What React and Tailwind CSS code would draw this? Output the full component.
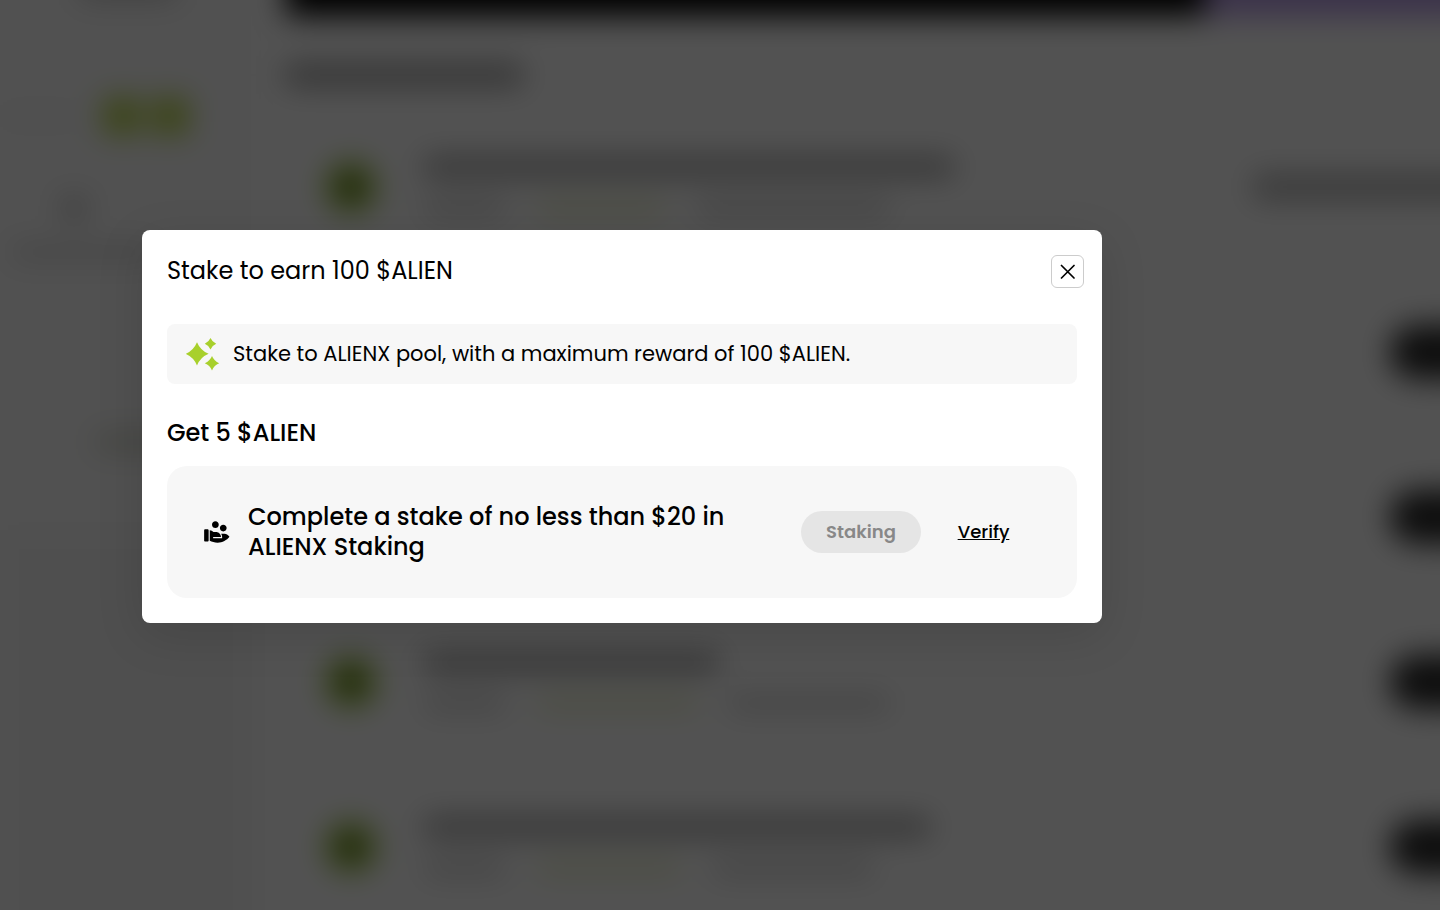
import { useState } from 'react';
import { RiHandCoinFill } from 'react-icons/ri';
import clsx from 'clsx';

const rows = [
  { id: 1, title: 'w-[528px]', reward: 'w-32', note: 'w-48', done: true },
  { id: 2, title: 'w-[420px]', reward: 'w-32', note: 'w-40' },
  { id: 3, title: 'w-[460px]', reward: 'w-32', note: 'w-40' },
  { id: 4, title: 'w-[292px]', reward: 'w-40', note: 'w-40' },
  { id: 5, title: 'w-[504px]', reward: 'w-36', note: 'w-40' },
];

const Sparkles = () => (
  <svg width="34" height="34" viewBox="0 0 34 34" fill="#a8d02c" aria-hidden="true" className="shrink-0">
    <path d="M11 5.2Q14.4 13.4 22.6 16.8Q14.4 20.2 11 28.4Q7.6 20.2 -0.4 16.8Q7.6 13.4 11 5.2Z" />
    <path d="M24.5 1Q26.2 5 30.2 6.7Q26.2 8.4 24.5 12.4Q22.8 8.4 18.8 6.7Q22.8 5 24.5 1Z" />
    <path d="M26 19Q28.1 24.1 33.2 26.2Q28.1 28.3 26 33.4Q23.9 28.3 18.8 26.2Q23.9 24.1 26 19Z" />
  </svg>
);

const CloseIcon = () => (
  <svg width="15" height="15" viewBox="0 0 15 15" fill="none" stroke="#000" strokeWidth="1.7" strokeLinecap="round" aria-hidden="true">
    <path d="M1.5 1.5L14 14M14 1.5L1.5 14" />
  </svg>
);

const TaskRow = ({ row }) => (
  <div className="flex h-[165px] shrink-0 items-center">
    <div className="flex size-[52px] shrink-0 items-center justify-center rounded-full bg-[#a3cc44]">
      <div className="size-5 rounded-full bg-[#1c2400]" />
    </div>
    <div className="ml-12 flex flex-col gap-6">
      <div className={clsx('h-[18px] bg-[#9c9c9c]', row.title)} />
      <div className="flex h-4 gap-8">
        <div className="w-20 bg-[#d0d0d0]" />
        <div className={clsx('bg-[#e8edc8]', row.reward)} />
        <div className={clsx('bg-[#d0d0d0]', row.note)} />
      </div>
    </div>
    <div className={clsx('ml-auto shrink-0', row.done ? 'h-6 w-[226px] bg-[#b0b0b0]' : 'h-[54px] w-[90px] rounded-l-full bg-[#2c2c2c]')} />
  </div>
);

// Runs 40px past every edge so the blur has no pale rim inside the window
const Backdrop = () => (
  <div className="absolute -inset-10 flex overflow-hidden bg-white blur-[15px]" aria-hidden="true">
    <aside className="flex w-[296px] shrink-0 flex-col bg-[#fbfbfb] pl-10">
      <div className="mx-auto h-10 w-24 bg-[#cccccc]" />
      <div className="mt-[98px] flex items-center justify-between pr-[68px]">
        <div className="h-3 w-20 bg-[#f0f0f0]" />
        <div className="flex gap-3">
          <div className="size-9 bg-[#b4d43c]" />
          <div className="size-9 bg-[#b4d43c]" />
        </div>
      </div>
      <div className="mt-16 ml-16 size-5 bg-[#b0b0b0]" />
      <div className="mt-7 ml-3 h-3 w-36 bg-[#cccccc]" />
      <div className="mt-[176px] ml-24 h-4 w-20 bg-[#d0d2c4]" />
      <div className="mt-20 flex-1 bg-[#f6f6f6]" />
    </aside>
    <main className="flex min-w-0 flex-1 flex-col pl-[30px]">
      <div className="flex h-[56px] shrink-0">
        <div className="flex-1 bg-black" />
        <div className="w-[275px] bg-[#b89ce6]" />
      </div>
      <div className="mt-[49px] h-5 w-[236px] shrink-0 bg-[#989898]" />
      <div className="mt-[19px] flex flex-col pl-[39px]">
        {rows.map((row) => <TaskRow key={row.id} row={row} />)}
      </div>
    </main>
  </div>
);

const App = () => {
  const [open, setOpen] = useState(true);

  return (
    <div className="relative h-screen overflow-hidden bg-white font-['Poppins','Inter',sans-serif] text-black">
      <Backdrop />
      {open && (
        <div className="absolute inset-0 flex items-center justify-center bg-black/68 pr-[196px] pb-[57px]">
          <section role="dialog" aria-modal="true" aria-labelledby="stake-title" className="w-full max-w-[960px] rounded-lg bg-white pb-[25px] shadow-[0_12px_48px_rgba(0,0,0,0.12)]">
            <header className="flex items-start justify-between pt-[25px] pr-[18px] pl-[25px]">
              <h2 id="stake-title" className="text-2xl leading-8">Stake to earn 100 $ALIEN</h2>
              <button
                type="button"
                aria-label="Close"
                onClick={() => setOpen(false)}
                className="flex size-[33px] items-center justify-center rounded-md border border-[#cccccc]"
              >
                <CloseIcon />
              </button>
            </header>
            <div className="mt-9 px-[25px]">
              <div className="flex h-[60px] items-center gap-[13px] rounded-lg bg-[#f7f7f7] px-[19px]">
                <Sparkles />
                <p className="text-[21px] leading-8">Stake to ALIENX pool, with a maximum reward of 100 $ALIEN.</p>
              </div>
              <h3 className="mt-8 text-2xl leading-[34px] font-medium">Get 5 $ALIEN</h3>
              <div className="mt-4 flex items-center rounded-[20px] bg-[#f7f7f7] py-9 pr-[67px] pl-9">
                <RiHandCoinFill size={27} className="shrink-0" />
                <p className="ml-[18px] flex-1 text-2xl leading-[30px] font-medium">
                  Complete a stake of no less than $20 in ALIENX Staking
                </p>
                <button type="button" disabled className="h-[42px] w-[120px] rounded-full bg-[#e5e5e5] text-lg font-semibold text-[#888888]">
                  Staking
                </button>
                <button type="button" className="ml-9 w-[53px] text-lg font-medium underline">Verify</button>
              </div>
            </div>
          </section>
        </div>
      )}
    </div>
  );
};

export default App;
